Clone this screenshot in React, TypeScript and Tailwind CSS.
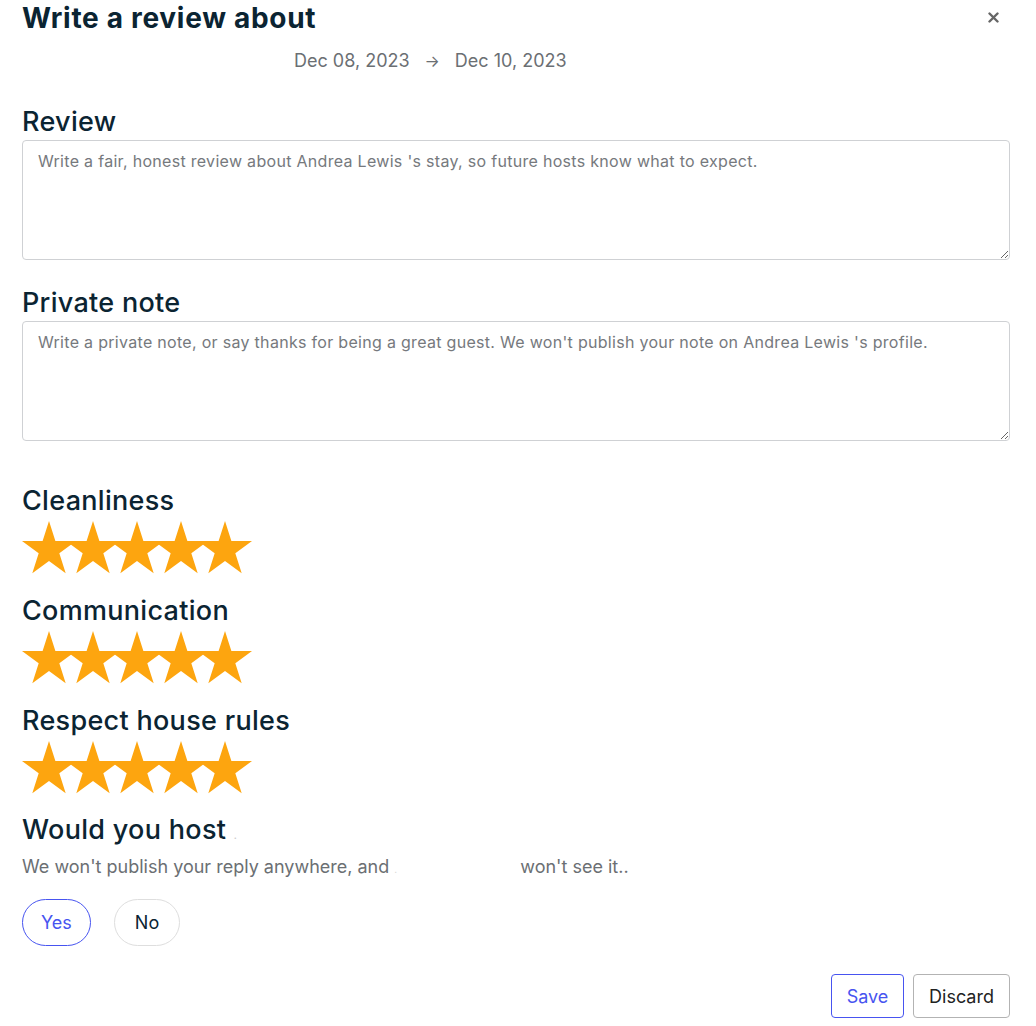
import React, { useState } from 'react';

// --- Star drawing, a regular five-point star; neighbours overlap by 10px ---
const Star: React.FC<{ first: boolean }> = ({ first }) => (
    <svg width="54" height="53" viewBox="0 0 54 52" preserveAspectRatio="none" className={`shrink-0 ${first ? '' : '-ml-[10px]'}`}>
        <polygon
            points="27,0 33.38,19.62 54,19.62 37.32,31.75 43.7,51.38 27,39.25 10.3,51.38 16.68,31.75 0,19.62 20.62,19.62"
            fill="#fda50f"
        />
    </svg>
);

const StarRating: React.FC<{ label: string; top: string }> = ({ label, top }) => (
    <div className={top}>
        <h3 className="text-[27px] leading-[32px] font-medium tracking-[0.3px] text-[#0b2432]">{label}</h3>
        <div className="flex mt-[4px]">
            {[0, 1, 2, 3, 4].map(i => <Star key={i} first={i === 0} />)}
        </div>
    </div>
);

export default function App() {
    const [wouldHost, setWouldHost] = useState<'yes' | 'no'>('yes');

    return (
        <div className="relative bg-white min-h-[1026px] pl-[22px] pr-[26px] font-['Inter','Liberation_Sans',sans-serif] text-[#0b2432]">
            <button className="absolute top-[12px] right-[37px] text-[#666]" aria-label="Close">
                <svg width="11" height="11" viewBox="0 0 11 11">
                    <path d="M1.5 1.5 L9.5 9.5 M9.5 1.5 L1.5 9.5" stroke="#666" strokeWidth="2.4" strokeLinecap="round" />
                </svg>
            </button>

            <h1 className="text-[28px] leading-[36px] font-bold tracking-[0.7px]">Write a review about</h1>

            <div className="mt-[13px] pl-[272px] flex items-center text-[18px] leading-[24px] text-[#6b6f73]">
                <span>Dec 08, 2023</span>
                <span className="mx-[15px] text-[16px]">→</span>
                <span>Dec 10, 2023</span>
            </div>

            <h2 className="mt-[33px] text-[27px] leading-[32px] font-medium tracking-[0.3px]">Review</h2>
            <textarea
                className="mt-[2px] block w-full h-[120px] border border-[#cfd1d4] rounded-[4px] px-[15px] py-[9px] text-[16px] leading-[22px] tracking-[0.3px] placeholder:text-[#76797d] outline-none"
                placeholder="Write a fair, honest review about Andrea Lewis 's stay, so future hosts know what to expect."
            />

            <h2 className="mt-[27px] text-[27px] leading-[32px] font-medium tracking-[0.3px]">Private note</h2>
            <textarea
                className="mt-[2px] block w-full h-[120px] border border-[#cfd1d4] rounded-[4px] px-[15px] py-[9px] text-[16px] leading-[22px] tracking-[0.3px] placeholder:text-[#76797d] outline-none"
                placeholder="Write a private note, or say thanks for being a great guest. We won't publish your note on Andrea Lewis 's profile."
            />

            <StarRating label="Cleanliness" top="mt-[44px]" />
            <StarRating label="Communication" top="mt-[21px]" />
            <StarRating label="Respect house rules" top="mt-[21px]" />

            <h3 className="mt-[20px] text-[27px] leading-[32px] font-medium tracking-[0.3px]">
                Would you host <span className="text-[10px] text-[#c9c9c9]">.</span>
            </h3>
            <p className="mt-[4px] text-[18px] leading-[24px] text-[#6b6f73]">
                We won't publish your reply anywhere, and <span className="text-[#d4d4d4] text-[10px]">.</span>
                <span className="inline-block w-[123px]" />won't see it..
            </p>

            <div className="mt-[18px] flex gap-[23px]">
                <button
                    onClick={() => setWouldHost('yes')}
                    className={`h-[47px] px-[18px] rounded-full border text-[18px] ${wouldHost === 'yes' ? 'border-[#4754f0] text-[#4754f0]' : 'border-[#dedede] text-[#0b2432]'}`}
                >
                    Yes
                </button>
                <button
                    onClick={() => setWouldHost('no')}
                    className={`h-[47px] px-[20px] rounded-full border text-[18px] ${wouldHost === 'no' ? 'border-[#4754f0] text-[#4754f0]' : 'border-[#dedede] text-[#0b2432]'}`}
                >
                    No
                </button>
            </div>

            <div className="mt-[28px] flex justify-end gap-[9px]">
                <button className="h-[44px] w-[73px] rounded-[4px] border border-[#4754f0] text-[#4754f0] text-[18px]">Save</button>
                <button className="h-[44px] w-[97px] rounded-[4px] border border-[#b3b3b3] text-[#222] text-[18px]">Discard</button>
            </div>
        </div>
    );
}
